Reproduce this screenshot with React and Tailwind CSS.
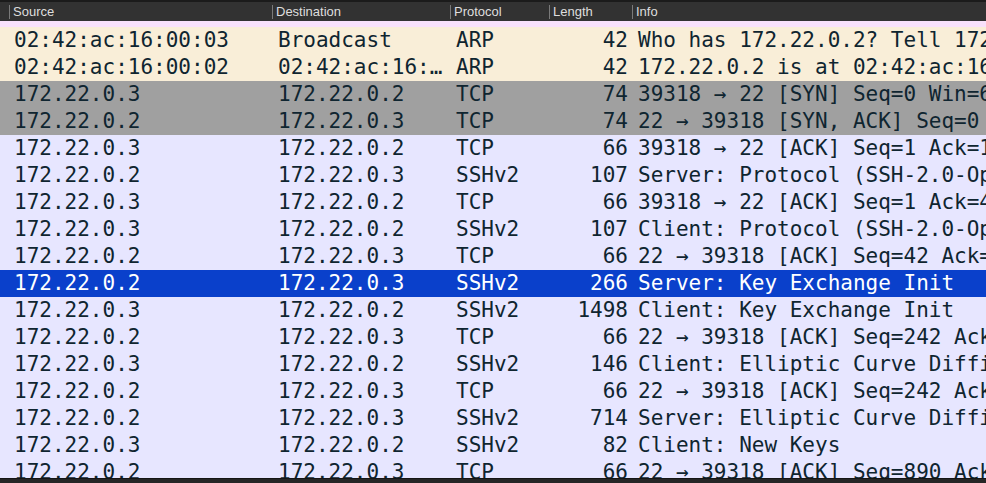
import React from "react";

const COLS = [
  { key: "src", label: "Source", w: "w-[263px]" },
  { key: "dst", label: "Destination", w: "w-[178px]" },
  { key: "proto", label: "Protocol", w: "w-[99px]" },
  { key: "len", label: "Length", w: "w-[83px]" },
  { key: "info", label: "Info", w: "flex-1" },
];

const A = "172.22.0.2";
const B = "172.22.0.3";

const rows = [
  { src: "02:42:ac:16:00:03", dst: "Broadcast", proto: "ARP", len: "42", info: "Who has 172.22.0.2? Tell 172.22.0.3", bg: "bg-[#f9eed8]" },
  { src: "02:42:ac:16:00:02", dst: "02:42:ac:16:00:03", proto: "ARP", len: "42", info: "172.22.0.2 is at 02:42:ac:16:00:02", bg: "bg-[#f9eed8]" },
  { src: B, dst: A, proto: "TCP", len: "74", info: "39318 → 22 [SYN] Seq=0 Win=64240 Len=0", bg: "bg-[#a0a0a0]" },
  { src: A, dst: B, proto: "TCP", len: "74", info: "22 → 39318 [SYN, ACK] Seq=0 Ack=1 Win=65160", bg: "bg-[#a0a0a0]" },
  { src: B, dst: A, proto: "TCP", len: "66", info: "39318 → 22 [ACK] Seq=1 Ack=1 Win=64256", bg: "bg-[#e7e6ff]" },
  { src: A, dst: B, proto: "SSHv2", len: "107", info: "Server: Protocol (SSH-2.0-OpenSSH_8.2p1)", bg: "bg-[#e7e6ff]" },
  { src: B, dst: A, proto: "TCP", len: "66", info: "39318 → 22 [ACK] Seq=1 Ack=42 Win=64256", bg: "bg-[#e7e6ff]" },
  { src: B, dst: A, proto: "SSHv2", len: "107", info: "Client: Protocol (SSH-2.0-OpenSSH_8.2p1)", bg: "bg-[#e7e6ff]" },
  { src: A, dst: B, proto: "TCP", len: "66", info: "22 → 39318 [ACK] Seq=42 Ack=42 Win=65152", bg: "bg-[#e7e6ff]" },
  { src: A, dst: B, proto: "SSHv2", len: "266", info: "Server: Key Exchange Init", selected: true },
  { src: B, dst: A, proto: "SSHv2", len: "1498", info: "Client: Key Exchange Init", bg: "bg-[#e7e6ff]" },
  { src: A, dst: B, proto: "TCP", len: "66", info: "22 → 39318 [ACK] Seq=242 Ack=1474 Win=64128", bg: "bg-[#e7e6ff]" },
  { src: B, dst: A, proto: "SSHv2", len: "146", info: "Client: Elliptic Curve Diffie-Hellman Key Exchange Init", bg: "bg-[#e7e6ff]" },
  { src: A, dst: B, proto: "TCP", len: "66", info: "22 → 39318 [ACK] Seq=242 Ack=1554 Win=64128", bg: "bg-[#e7e6ff]" },
  { src: A, dst: B, proto: "SSHv2", len: "714", info: "Server: Elliptic Curve Diffie-Hellman Key Exchange Reply", bg: "bg-[#e7e6ff]" },
  { src: B, dst: A, proto: "SSHv2", len: "82", info: "Client: New Keys", bg: "bg-[#e7e6ff]" },
  { src: A, dst: B, proto: "TCP", len: "66", info: "22 → 39318 [ACK] Seq=890 Ack=1570 Win=64128", bg: "bg-[#e7e6ff]" },
];

const HeaderCell = ({ col }) => (
  <div className={`${col.w} h-full flex items-center shrink-0 overflow-hidden`}>
    <div className="w-px h-[14px] bg-[#7a7a7a]" />
    <span className="pl-[3px] text-[13px] text-[#dedede] whitespace-nowrap">{col.label}</span>
  </div>
);

const PacketRow = ({ row }) => {
  const tone = row.selected ? "bg-[#0a40cb] text-white" : `${row.bg} text-[#0f2530]`;
  return (
    <div className={`flex h-[27px] shrink-0 items-center ${tone}`}>
      <div className="w-[9px] shrink-0" />
      <div className="w-[263px] shrink-0 pl-[5px] whitespace-nowrap overflow-hidden">{row.src}</div>
      <div className="w-[178px] shrink-0 pl-[6px] pr-[4px] whitespace-nowrap overflow-hidden text-ellipsis">{row.dst}</div>
      <div className="w-[99px] shrink-0 pl-[6px] whitespace-nowrap overflow-hidden">{row.proto}</div>
      <div className="w-[83px] shrink-0 pr-[4px] text-right whitespace-nowrap">{row.len}</div>
      <div className="flex-1 pl-[6px] whitespace-nowrap overflow-hidden">{row.info}</div>
    </div>
  );
};

export default function App() {
  return (
    <div className="w-[986px] h-[483px] flex flex-col overflow-hidden bg-[#e7e6ff]">
      <div className="h-[21px] shrink-0 flex items-center bg-[#323232] border-t-2 border-[#1b1b1b] font-['Liberation_Sans',Arial,sans-serif]">
        <div className="w-[9px] shrink-0" />
        {COLS.map((c) => (
          <HeaderCell key={c.key} col={c} />
        ))}
      </div>
      <div className="flex-1 min-h-0 flex flex-col overflow-hidden font-['DejaVu_Sans_Mono',monospace] text-[21px] leading-[27px]">
        <div className="h-[6px] shrink-0 bg-[#f8e1fb]" />
        {rows.map((r, i) => (
          <PacketRow key={i} row={r} />
        ))}
      </div>
      <div className="h-[5px] shrink-0 bg-[#262626] border-t border-[#151515]" />
    </div>
  );
}
